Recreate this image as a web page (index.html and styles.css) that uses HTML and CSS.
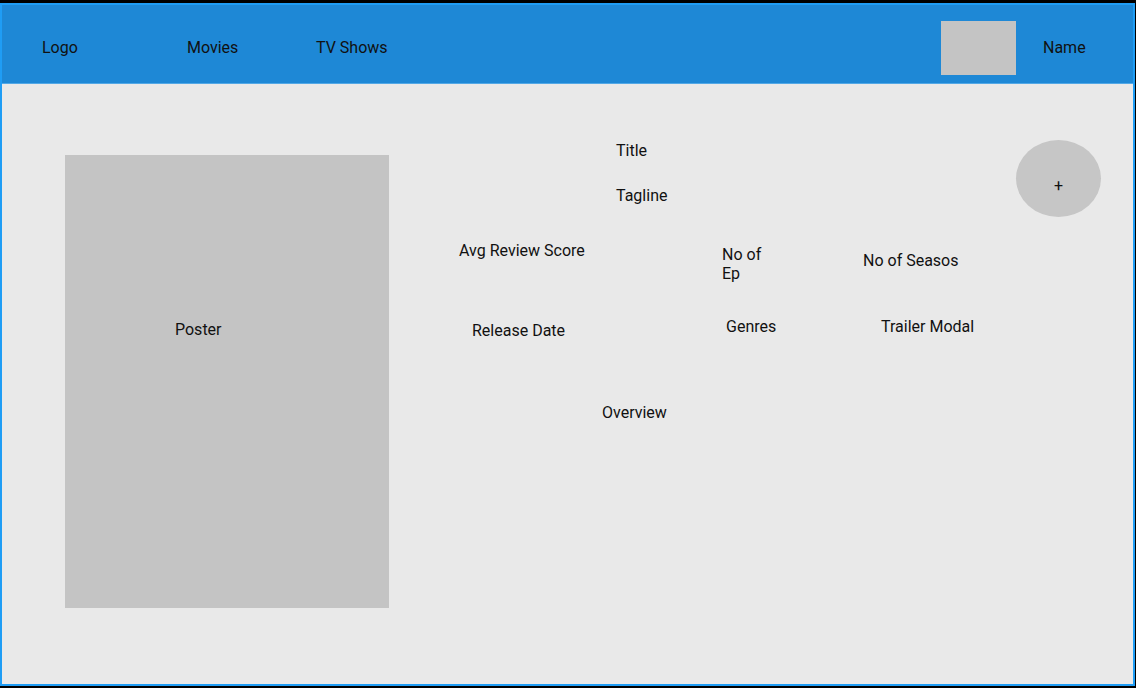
FILE: index.html
```html
<!DOCTYPE html>
<html lang="en">
<head>
<meta charset="utf-8">
<title>Detail wireframe</title>
<link rel="stylesheet" href="styles.css">
</head>
<body>
<div class="frame">
  <header class="topbar">
    <div class="brand">Logo</div>
    <nav class="nav">
      <a class="nav-link nav-movies">Movies</a>
      <a class="nav-link nav-tv">TV Shows</a>
    </nav>
    <div class="user">
      <div class="avatar"></div>
      <div class="user-name">Name</div>
    </div>
  </header>
  <main class="detail">
    <div class="poster">Poster</div>
    <section class="info">
      <div class="row-title">Title</div>
      <div class="row-tagline">Tagline</div>
      <div class="stats">
        <div class="stat stat-score">Avg Review Score</div>
        <div class="stat stat-eps">No of Ep</div>
        <div class="stat stat-seasons">No of Seasos</div>
        <div class="stat stat-release">Release Date</div>
        <div class="stat stat-genres">Genres</div>
        <div class="stat stat-trailer">Trailer Modal</div>
      </div>
      <div class="row-overview">Overview</div>
    </section>
    <aside class="actions">
      <button class="add-btn">+</button>
    </aside>
  </main>
</div>
</body>
</html>
```
FILE: styles.css
```css
html, body {
  margin: 0;
  padding: 0;
  background: #000;
}
body {
  font-family: Roboto, "Liberation Sans", sans-serif;
  font-size: 16px;
  line-height: 19px;
  color: #111;
}
.frame {
  margin-top: 3px;
  width: 1131px;
  height: 679px;
  border: 2px solid #1f9df5;
  background: #e9e9e9;
  display: flex;
  flex-direction: column;
}
.topbar {
  height: 78px;
  background: #1e88d6;
  border-bottom: 1px solid #52a8e6;
  display: flex;
  align-items: flex-start;
}
.brand {
  width: 145px;
  margin-left: 40px;
  margin-top: 33px;
}
.nav {
  display: flex;
  margin-top: 33px;
}
.nav-link {
  display: block;
  color: #111;
}
.nav-movies { width: 129px; }
.user {
  margin-left: auto;
  display: flex;
  align-items: flex-start;
}
.avatar {
  width: 75px;
  height: 54px;
  margin-top: 16px;
  background: #c4c4c4;
}
.user-name {
  width: 90px;
  margin-left: 27px;
  margin-top: 33px;
}
.detail {
  flex: 1;
  display: flex;
  align-items: flex-start;
}
.poster {
  box-sizing: border-box;
  width: 324px;
  height: 453px;
  margin-left: 63px;
  margin-top: 71px;
  padding-top: 165px;
  padding-left: 110px;
  background: #c4c4c4;
}
.info {
  flex: 1;
  padding-top: 57px;
}
.row-title { padding-left: 227px; }
.row-tagline { padding-left: 227px; margin-top: 26px; }
.stats {
  margin-top: 36px;
  display: grid;
  grid-template-columns: 333px 141px 1fr;
  grid-template-rows: 42px 19px;
  row-gap: 34px;
  align-items: start;
}
.stat-score { padding-left: 70px; }
.stat-eps { width: 50px; margin-top: 4px; }
.stat-seasons { margin-top: 10px; }
.stat-release { padding-left: 83px; margin-top: 4px; }
.stat-genres { padding-left: 4px; }
.stat-trailer { padding-left: 18px; }
.row-overview { padding-left: 213px; margin-top: 67px; }
.actions {
  margin-top: 56px;
  margin-right: 32px;
}
.add-btn {
  box-sizing: border-box;
  display: flex;
  justify-content: center;
  align-items: flex-start;
  width: 85px;
  height: 77px;
  border: none;
  border-radius: 50%;
  background: #c6c6c6;
  padding: 36px 0 0;
  font-family: Roboto, "Liberation Sans", sans-serif;
  font-size: 16px;
  line-height: 19px;
  color: #111;
}
```
